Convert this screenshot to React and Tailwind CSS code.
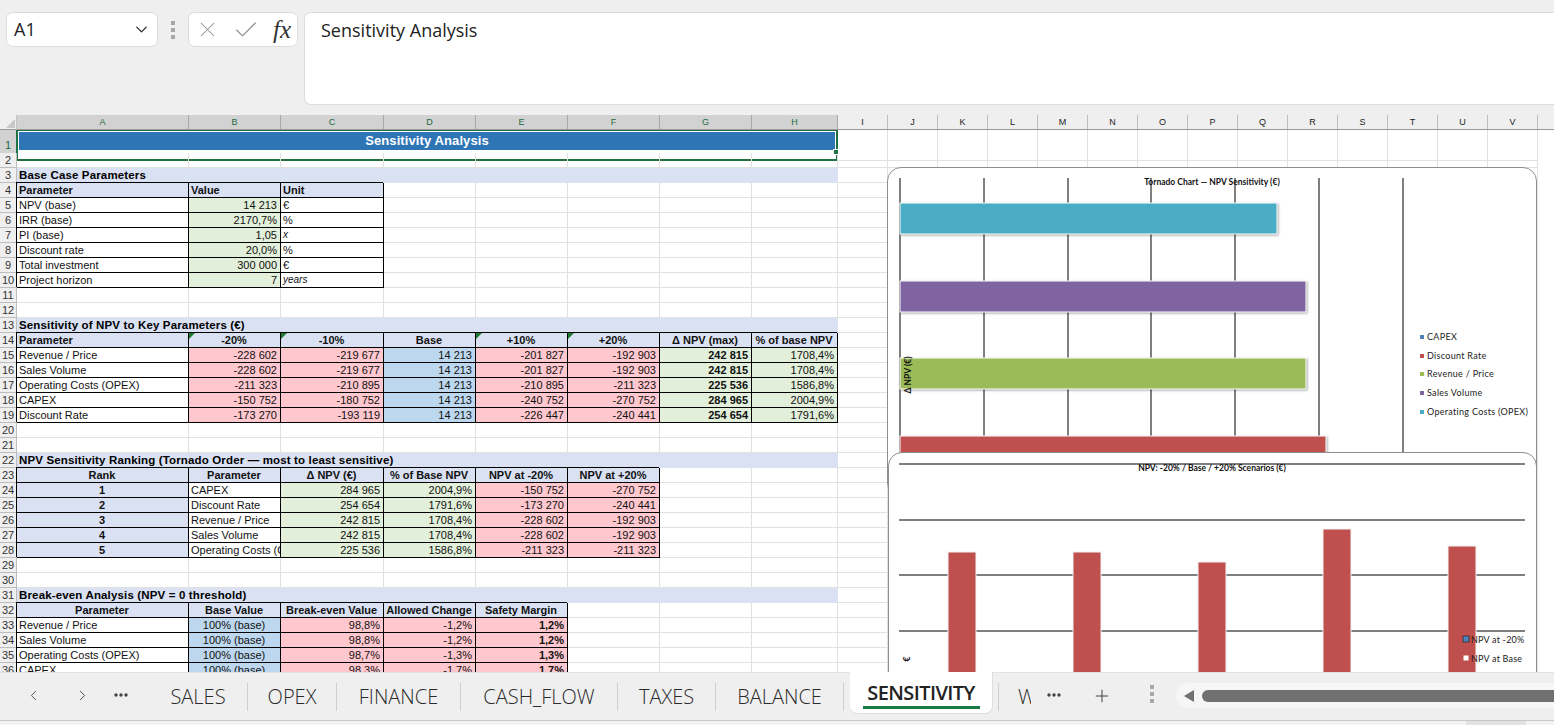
import React from "react";
import { X, Check, ChevronDown, ChevronLeft, ChevronRight, Plus } from "lucide-react";

const letters = "ABCDEFGHIJKLMNOPQRSTUVW".split("");
const gridCols =
  "grid grid-cols-[17px_172px_92px_103px_92px_92px_92px_92px_86px_repeat(14,50px)]";

// cell kinds
const kinds = {
  hl: "bg-[#d9e1f2] font-bold text-left",
  hc: "bg-[#d9e1f2] font-bold text-center",
  rank: "bg-[#d9e1f2] font-bold text-center",
  l: "bg-white text-left",
  li: "bg-white text-left italic text-[10px]",
  g: "bg-[#e2efda] text-right",
  gb: "bg-[#e2efda] text-right font-bold",
  r: "bg-[#ffc7ce] text-right",
  rb: "bg-[#ffc7ce] text-right font-bold",
  b: "bg-[#bdd7ee] text-right",
  bc: "bg-[#bdd7ee] text-center",
};

const sens = (name, a, b, c, d, delta, pct) => [
  [name, "l"], [a, "r"], [b, "r"], ["14 213", "b"], [c, "r"], [d, "r"], [delta, "gb"], [pct, "g"],
];
const rank = (n, name, delta, pct, a, b) => [
  [n, "rank"], [name, "l"], [delta, "g"], [pct, "g"], [a, "r"], [b, "r"],
];
const even = (name, v, c, m) => [
  [name, "l"], ["100% (base)", "bc"], [v, "r"], [c, "r"], [m, "rb"],
];

const rows = {
  3: { title: "Base Case Parameters" },
  4: { cells: [["Parameter", "hl"], ["Value", "hl"], ["Unit", "hl"]] },
  5: { cells: [["NPV (base)", "l"], ["14 213", "g"], ["€", "l"]] },
  6: { cells: [["IRR (base)", "l"], ["2170,7%", "g"], ["%", "l"]] },
  7: { cells: [["PI (base)", "l"], ["1,05", "g"], ["x", "li"]] },
  8: { cells: [["Discount rate", "l"], ["20,0%", "g"], ["%", "l"]] },
  9: { cells: [["Total investment", "l"], ["300 000", "g"], ["€", "l"]] },
  10: { cells: [["Project horizon", "l"], ["7", "g"], ["years", "li"]] },
  13: { title: "Sensitivity of NPV to Key Parameters (€)" },
  14: {
    cells: [["Parameter", "hl"], ["-20%", "hc", 1], ["-10%", "hc", 1], ["Base", "hc"], ["+10%", "hc", 1], ["+20%", "hc", 1], ["Δ NPV (max)", "hc"], ["% of base NPV", "hc"]],
  },
  15: { cells: sens("Revenue / Price", "-228 602", "-219 677", "-201 827", "-192 903", "242 815", "1708,4%") },
  16: { cells: sens("Sales Volume", "-228 602", "-219 677", "-201 827", "-192 903", "242 815", "1708,4%") },
  17: { cells: sens("Operating Costs (OPEX)", "-211 323", "-210 895", "-210 895", "-211 323", "225 536", "1586,8%") },
  18: { cells: sens("CAPEX", "-150 752", "-180 752", "-240 752", "-270 752", "284 965", "2004,9%") },
  19: { cells: sens("Discount Rate", "-173 270", "-193 119", "-226 447", "-240 441", "254 654", "1791,6%") },
  22: { title: "NPV Sensitivity Ranking (Tornado Order — most to least sensitive)" },
  23: { cells: [["Rank", "hc"], ["Parameter", "hc"], ["Δ NPV (€)", "hc"], ["% of Base NPV", "hc"], ["NPV at -20%", "hc"], ["NPV at +20%", "hc"]] },
  24: { cells: rank("1", "CAPEX", "284 965", "2004,9%", "-150 752", "-270 752") },
  25: { cells: rank("2", "Discount Rate", "254 654", "1791,6%", "-173 270", "-240 441") },
  26: { cells: rank("3", "Revenue / Price", "242 815", "1708,4%", "-228 602", "-192 903") },
  27: { cells: rank("4", "Sales Volume", "242 815", "1708,4%", "-228 602", "-192 903") },
  28: { cells: rank("5", "Operating Costs (OPEX)", "225 536", "1586,8%", "-211 323", "-211 323") },
  31: { title: "Break-even Analysis (NPV = 0 threshold)" },
  32: { cells: [["Parameter", "hc"], ["Base Value", "hc"], ["Break-even Value", "hc"], ["Allowed Change", "hc"], ["Safety Margin", "hc"]] },
  33: { cells: even("Revenue / Price", "98,8%", "-1,2%", "1,2%") },
  34: { cells: even("Sales Volume", "98,8%", "-1,2%", "1,2%") },
  35: { cells: even("Operating Costs (OPEX)", "98,7%", "-1,3%", "1,3%") },
  36: { cells: even("CAPEX", "98,3%", "-1,7%", "1,7%") },
};

const rowNumbers = Array.from({ length: 35 }, (_, i) => i + 2);

function Dots() {
  return (
    <svg width="14" height="4" viewBox="0 0 14 4" className="fill-[#444]">
      <circle cx="2" cy="2" r="1.7" />
      <circle cx="7" cy="2" r="1.7" />
      <circle cx="12" cy="2" r="1.7" />
    </svg>
  );
}

function Kebab() {
  return (
    <div className="flex flex-col gap-[3px]">
      <span className="w-[4px] h-[4px] bg-[#a8a8a8]" />
      <span className="w-[4px] h-[4px] bg-[#a8a8a8]" />
      <span className="w-[4px] h-[4px] bg-[#a8a8a8]" />
    </div>
  );
}

function FormulaBar() {
  return (
    <div className="h-[115px] shrink-0 bg-[#efefef] flex items-start pt-[12px] pl-[6px] font-['Open_Sans',sans-serif] text-[#222]">
      <div className="w-[152px] h-[35px] bg-white border border-[#dcdcdc] rounded-[7px] flex items-center justify-between pl-[7px] pr-[6px] text-[18px]">
        <span>A1</span>
        <ChevronDown size={19} strokeWidth={1.5} />
      </div>
      <div className="w-[30px] h-[35px] flex items-center justify-center">
        <Kebab />
      </div>
      <div className="w-[110px] h-[35px] bg-white border border-[#dcdcdc] rounded-[7px] flex items-center justify-between pl-[6px] pr-[6px]">
        <X size={25} strokeWidth={1} className="text-[#8e8e8e]" />
        <Check size={28} strokeWidth={1} className="text-[#8e8e8e]" />
        <span className="font-['Liberation_Serif',serif] italic text-[25px] leading-none text-[#333]">fx</span>
      </div>
      <div className="ml-[6px] flex-1 h-[93px] bg-white border border-r-0 border-[#dcdcdc] rounded-l-[7px] pl-[16px] pt-[3px] text-[18px] leading-[28px]">
        Sensitivity Analysis
      </div>
    </div>
  );
}

function ColumnHeader() {
  return (
    <div className={`${gridCols} h-[15px] shrink-0 bg-[#efefef] border-b border-[#9a9a9a] font-['Liberation_Sans',sans-serif] text-[9px]`}>
      <div className="border-r border-[#c4c4c4] flex items-end justify-end pr-[1px] pb-[1px]">
        <span className="w-0 h-0 border-l-[9px] border-l-transparent border-b-[9px] border-b-[#c8c8c8]" />
      </div>
      {letters.map((l, i) => (
        <div
          key={l}
          className={
            i < 8
              ? "bg-[#d2d2d2] border-r border-[#a8a8a8] text-center text-[#1c6b40] leading-[14px]"
              : "border-r border-[#bdbdbd] text-center text-[#222] leading-[14px]"
          }
        >
          {l}
        </div>
      ))}
    </div>
  );
}

function RowHead({ n }) {
  return (
    <div className="bg-[#efefef] border-r border-b border-[#bdbdbd] text-center text-[#333] text-[11px] leading-[14px]">
      {n}
    </div>
  );
}

function Blank({ span }) {
  return <div className="border-r border-b border-[#e1e1e1]" style={span ? { gridColumn: `span ${span}` } : undefined} />;
}

function Row({ n }) {
  const row = rows[n] || {};
  if (row.title) {
    return (
      <div className={`${gridCols} h-[15px]`}>
        <RowHead n={n} />
        <div className="col-span-8 bg-[#d9e1f2] font-bold text-[11.5px] leading-[15px] pl-[2px] tracking-[0.15px] whitespace-nowrap">
          {row.title}
        </div>
        {letters.slice(8).map((l) => (
          <Blank key={l} />
        ))}
      </div>
    );
  }
  const cells = row.cells || [];
  return (
    <div className={`${gridCols} h-[15px]`}>
      <RowHead n={n} />
      {cells.map(([text, kind, flagged], i) => (
        <div
          key={i}
          className={`relative overflow-hidden whitespace-nowrap px-[2px] pr-[3px] leading-[14px] border-r border-b border-black shadow-[-1px_-1px_0_0_#000] text-[#111] ${kinds[kind]}`}
        >
          {flagged && <span className="absolute left-0 top-0 w-[6px] h-[6px] bg-[#1e7b34] [clip-path:polygon(0_0,100%_0,0_100%)]" />}
          {text}
        </div>
      ))}
      {letters.slice(cells.length).map((l) => (
        <Blank key={l} />
      ))}
    </div>
  );
}

function Sheet() {
  return (
    <div className="relative flex-1 min-h-0 overflow-hidden bg-white font-['Liberation_Sans',sans-serif] text-[11px]">
      <div className={`${gridCols} h-[23px]`}>
        <div className="bg-[#d2d2d2] border-r border-b border-[#a8a8a8] text-center text-[#1c6b40] text-[11px] leading-[30px]">1</div>
        <div className="col-span-8 border-2 border-[#1f7145] p-[1px] pb-0 -mt-px ml-[-1px]">
          <div className="h-[18px] bg-[#2e75b6] text-white text-center font-bold text-[13px] leading-[18px] tracking-[0.1px]">
            Sensitivity Analysis
          </div>
        </div>
        {letters.slice(8).map((l) => (
          <Blank key={l} />
        ))}
      </div>
      {rowNumbers.map((n) => (
        <Row key={n} n={n} />
      ))}
      <span className="absolute left-[833px] top-[19px] w-[6px] h-[6px] bg-[#1f7145] border border-white" />
      <TornadoChart />
      <ScenarioChart />
    </div>
  );
}

function TornadoChart() {
  const gridX = [12, 96, 180, 263, 347, 431, 515];
  const bars = [
    { y: 35, w: 377, fill: "#4bacc6" },
    { y: 113, w: 406, fill: "#8064a2" },
    { y: 190, w: 406, fill: "#9bbb59" },
    { y: 268, w: 426, fill: "#c0504d" },
  ];
  const legend = [
    ["CAPEX", "#4f81bd", 169],
    ["Discount Rate", "#c0504d", 188],
    ["Revenue / Price", "#9bbb59", 206],
    ["Sales Volume", "#8064a2", 225],
    ["Operating Costs (OPEX)", "#4bacc6", 244],
  ];
  return (
    <div className="absolute left-[887px] top-[37px] w-[650px] h-[330px] bg-white border border-[#8f8f8f] rounded-[14px] overflow-hidden">
      <svg width="650" height="330" className="font-['Lato',sans-serif]">
        {gridX.map((x) => (
          <line key={x} x1={x} x2={x} y1="10" y2="330" stroke="#000" strokeWidth="1" />
        ))}
        {bars.map((b) => (
          <rect key={b.y} x="12" y={b.y} width={b.w} height="31" fill={b.fill} stroke="#fff" strokeWidth="1" className="drop-shadow-[1px_1px_1px_rgba(0,0,0,0.35)]" />
        ))}
        <text x="324" y="17" textAnchor="middle" fontSize="8.5" fontWeight="700" fill="#111">
          Tornado Chart — NPV Sensitivity (€)
        </text>
        <text transform="translate(23 207) rotate(-90)" textAnchor="middle" fontSize="8.5" fontWeight="700" fill="#111">
          Δ NPV (€)
        </text>
        {legend.map(([label, color, y]) => (
          <g key={label}>
            <rect x="532" y={y - 2} width="4" height="4" fill={color} />
            <text x="539" y={y + 3} fontSize="9" letterSpacing="0.3" fill="#222">
              {label}
            </text>
          </g>
        ))}
      </svg>
    </div>
  );
}

function ScenarioChart() {
  const lines = [11, 67, 122, 178];
  const bars = [
    { x: 59, top: 99 },
    { x: 184, top: 99 },
    { x: 309, top: 109 },
    { x: 434, top: 76 },
    { x: 559, top: 93 },
  ];
  return (
    <div className="absolute left-[888px] top-[322px] w-[649px] h-[300px] bg-white border border-[#8f8f8f] rounded-[14px] overflow-hidden">
      <svg width="649" height="300" className="font-['Lato',sans-serif]">
        {lines.map((y) => (
          <line key={y} x1="10" x2="636" y1={y} y2={y} stroke="#000" strokeWidth="1" />
        ))}
        {bars.map((b) => (
          <rect key={b.x} x={b.x} y={b.top} width="28" height={300 - b.top} fill="#c0504d" stroke="#f2f2f2" strokeWidth="1" />
        ))}
        <text x="323" y="18" textAnchor="middle" fontSize="8.5" fontWeight="700" fill="#111">
          NPV: -20% / Base / +20% Scenarios (€)
        </text>
        <text transform="translate(21 206) rotate(-90)" textAnchor="middle" fontSize="8.5" fontWeight="700" fill="#111">
          €
        </text>
        <rect x="574" y="183" width="6" height="6" fill="#4f81bd" stroke="#222" strokeWidth="0.7" />
        <text x="582" y="190" fontSize="9" letterSpacing="0.2" fill="#222">NPV at -20%</text>
        <rect x="574" y="202" width="6" height="6" fill="#fff" stroke="#c0504d" strokeWidth="1" />
        <text x="582" y="209" fontSize="9" letterSpacing="0.2" fill="#222">NPV at Base</text>
      </svg>
    </div>
  );
}

function Tab({ label, width }) {
  return (
    <div className={`${width} h-[28px] border-r border-[#cfcfcf] flex items-center justify-center text-[20px] text-[#2b2b2b] font-light`}>
      {label}
    </div>
  );
}

function TabBar() {
  return (
    <div className="relative h-[48px] shrink-0 flex items-start bg-[#efefef] font-['Open_Sans',sans-serif] border-t border-[#e2e2e2]">
      <div className="w-[149px] h-[47px] flex items-center text-[#444] pl-[25px] pb-[3px]">
        <ChevronLeft size={17} strokeWidth={1.3} />
        <ChevronRight size={17} strokeWidth={1.3} className="ml-[32px]" />
        <span className="ml-[23px]"><Dots /></span>
      </div>
      <div className="flex items-center pt-[10px]">
        <Tab label="SALES" width="w-[99px]" />
        <Tab label="OPEX" width="w-[89px]" />
        <Tab label="FINANCE" width="w-[124px]" />
        <Tab label="CASH_FLOW" width="w-[157px]" />
        <Tab label="TAXES" width="w-[98px]" />
        <Tab label="BALANCE" width="w-[128px]" />
      </div>
      <div className="w-[143px] ml-[6px] h-[42px] -mt-px bg-white rounded-b-[8px] border-b border-r border-[#dedede] flex flex-col items-center pt-[7px]">
        <span className="text-[20px] font-semibold leading-[27px] text-[#222] tracking-[-0.6px] border-b-[3px] border-[#1b7a43] w-[117px] text-center h-[30px] whitespace-nowrap">
          SENSITIVITY
        </span>
      </div>
      <div className="h-[28px] mt-[10px] ml-[5px] border-l border-[#cfcfcf]" />
      <div className="w-[13px] ml-[19px] mt-[10px] overflow-hidden text-[20px] leading-[28px] font-light text-[#2b2b2b]">WACC</div>
      <span className="ml-[16px] mt-[20px]"><Dots /></span>
      <Plus size={20} strokeWidth={1.1} className="ml-[31px] mt-[13px] text-[#333]" />
      <span className="ml-[38px] mt-[12px]"><Kebab /></span>
      <div className="ml-[22px] mt-[10px] flex-1 h-[25px] bg-[#f6f6f6] rounded-l-[12px] flex items-center pl-[8px]">
        <span className="w-0 h-0 border-y-[6px] border-y-transparent border-r-[10px] border-r-[#707070]" />
        <div className="ml-[8px] flex-1 h-[12px] bg-[#707070] rounded-l-[6px]" />
      </div>
    </div>
  );
}

export default function App() {
  return (
    <div className="w-[1554px] h-[725px] flex flex-col overflow-hidden bg-[#efefef]">
      <FormulaBar />
      <ColumnHeader />
      <Sheet />
      <TabBar />
      <div className="h-[5px] shrink-0 bg-[#f3f3f3] border-t border-[#c8c8c8] flex justify-end pr-[28px]">
        <div className="w-[60px] bg-[#e2e2e2]" />
      </div>
    </div>
  );
}
